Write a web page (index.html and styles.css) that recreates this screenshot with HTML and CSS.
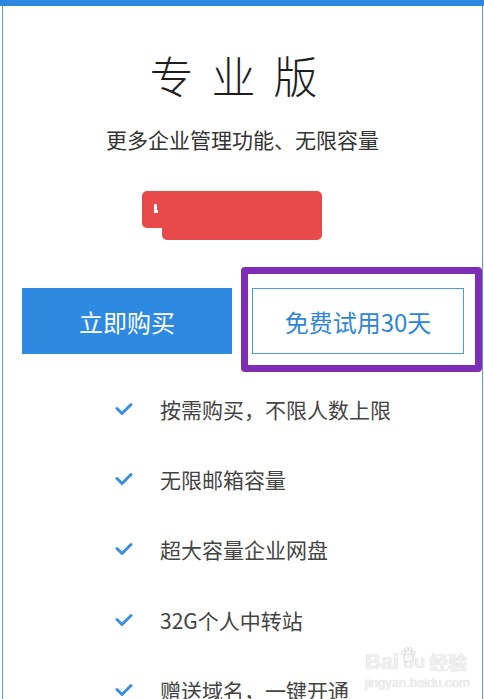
FILE: index.html
```
<!DOCTYPE html>
<html lang="zh-CN">
<head>
    <meta charset="UTF-8">
    <meta name="viewport" content="width=device-width, initial-scale=1.0">
    <title>专业版</title>
    <link rel="stylesheet" href="styles.css">
</head>
<body>
    <div class="top-bar"></div>
    <div class="plan-card">
        <h1 class="plan-name">专业版</h1>
        <p class="plan-desc">更多企业管理功能、无限容量</p>

        <div class="price-wrap">
            <div class="price">
                <span class="price-text">¥ 000</span>
                <!-- redacted price -->
                <span class="mask mask-a"></span>
                <span class="mask mask-b"></span>
                <span class="mask-mark"></span>
            </div>
        </div>

        <div class="actions">
            <button class="buy">立即购买</button>
            <div class="trial-wrap">
                <button class="trial">免费试用30天</button>
                <span class="highlight"></span>
            </div>
        </div>

        <ul class="features">
            <li><svg class="check" viewBox="0 0 18 14"><polyline points="2,6.5 7,11.5 16,2.5"/></svg><span>按需购买，不限人数上限</span></li>
            <li><svg class="check" viewBox="0 0 18 14"><polyline points="2,6.5 7,11.5 16,2.5"/></svg><span>无限邮箱容量</span></li>
            <li><svg class="check" viewBox="0 0 18 14"><polyline points="2,6.5 7,11.5 16,2.5"/></svg><span>超大容量企业网盘</span></li>
            <li><svg class="check" viewBox="0 0 18 14"><polyline points="2,6.5 7,11.5 16,2.5"/></svg><span>32G个人中转站</span></li>
            <li><svg class="check" viewBox="0 0 18 14"><polyline points="2,6.5 7,11.5 16,2.5"/></svg><span>赠送域名，一键开通</span></li>
        </ul>

        <div class="watermark">
            <div class="wm-logo">
                <span>Bai</span>
                <svg class="paw" viewBox="0 0 24 24">
                    <circle cx="6" cy="9" r="2.6"/>
                    <circle cx="10" cy="4.5" r="2.6"/>
                    <circle cx="15" cy="4.5" r="2.6"/>
                    <circle cx="19" cy="9" r="2.6"/>
                    <ellipse cx="12.5" cy="16" rx="6.5" ry="5.5"/>
                </svg>
                <span class="wm-du">du</span>
                <span>经验</span>
            </div>
            <div class="wm-url">jingyan.baidu.com</div>
        </div>
    </div>
</body>
</html>
```

FILE: styles.css
```
body {
    margin: 0;
    padding: 0;
    background-color: #fff;
    font-family: "Noto Sans CJK SC", "Noto Sans", sans-serif;
    overflow: hidden;
}

.top-bar {
    height: 6px;
    background-color: #2d87de;
}

.plan-card {
    position: relative;
    margin: 0 1px 0 2px;
    border-left: 1px solid #5a9fe6;
    border-right: 1px solid #5a9fe6;
    padding-top: 45px;
    height: 700px;
    box-sizing: border-box;
}

.plan-name {
    margin: 0;
    font-size: 44px;
    line-height: 48px;
    font-weight: 300;
    letter-spacing: 18px;
    color: #1e1e1e;
    text-align: center;
}

.plan-desc {
    margin: 26px 0 0 0;
    font-size: 21px;
    line-height: 28px;
    color: #333;
    text-align: center;
}

.price-wrap {
    display: flex;
    justify-content: center;
    padding-right: 21px;
    margin-top: 38px;
}

.price {
    position: relative;
    width: 180px;
    height: 50px;
}

.price-text {
    display: block;
    text-align: center;
    font-size: 40px;
    line-height: 52px;
    font-weight: 700;
    color: #222;
    padding-left: 20px;
    letter-spacing: 8px;
}

.mask {
    position: absolute;
    background-color: #e84a4c;
    border-radius: 5px;
}

.mask-a {
    left: 0;
    top: 0;
    width: 180px;
    height: 37px;
}

.mask-b {
    left: 20px;
    top: 12px;
    width: 160px;
    height: 37px;
}

.mask-mark {
    position: absolute;
    left: 12px;
    top: 13px;
    width: 4px;
    height: 9px;
    border-left: 3px solid #fff;
    border-bottom: 3px solid #fff;
    box-sizing: border-box;
}

.actions {
    display: flex;
    gap: 20px;
    padding: 0 18px 0 19px;
    margin-top: 47px;
}

.buy,
.trial {
    height: 66px;
    font-family: "Noto Sans CJK SC", "Noto Sans", sans-serif;
    font-size: 24px;
    cursor: pointer;
}

.buy {
    flex: 0 0 210px;
    background-color: #2e8ae0;
    color: #fff;
    border: none;
}

.trial-wrap {
    position: relative;
    flex: 0 0 212px;
    display: flex;
}

.trial {
    width: 100%;
    background-color: #fff;
    color: #2f86d8;
    border: 1px solid #4a9ae0;
}

.highlight {
    position: absolute;
    left: -11px;
    top: -21px;
    right: -18px;
    bottom: -18px;
    border: 7px solid #7e2eb6;
    border-radius: 4px;
}

.features {
    list-style: none;
    margin: 20px 0 0 0;
    padding: 0 0 0 112px;
}

.features li {
    display: flex;
    align-items: center;
    height: 70.2px;
    font-size: 21px;
    color: #444;
}

.check {
    width: 18px;
    height: 14px;
    margin-right: 27px;
    fill: none;
    stroke: #3a8ee0;
    stroke-width: 3;
    stroke-linecap: round;
    stroke-linejoin: round;
}

.watermark {
    position: absolute;
    left: 362px;
    top: 644px;
    color: #f0f0f0;
    text-shadow: 0 0 1px #c8c8c8;
    font-family: "Liberation Sans", Arial, sans-serif;
}

.wm-logo {
    display: flex;
    align-items: flex-end;
    font-size: 22px;
    line-height: 24px;
    font-weight: 700;
}

.wm-logo span:last-child {
    font-family: "Noto Sans CJK SC", sans-serif;
    font-size: 19px;
    margin-left: 4px;
}

.paw {
    width: 18px;
    height: 18px;
    margin: 0 -14px -4px 0;
    position: relative;
    top: -14px;
    fill: #f6f6f6;
    stroke: #c8c8c8;
    stroke-width: 0.8;
}

.wm-du {
    font-size: 18px;
}

.wm-url {
    font-size: 13px;
    line-height: 16px;
    margin-top: 1px;
}
```
